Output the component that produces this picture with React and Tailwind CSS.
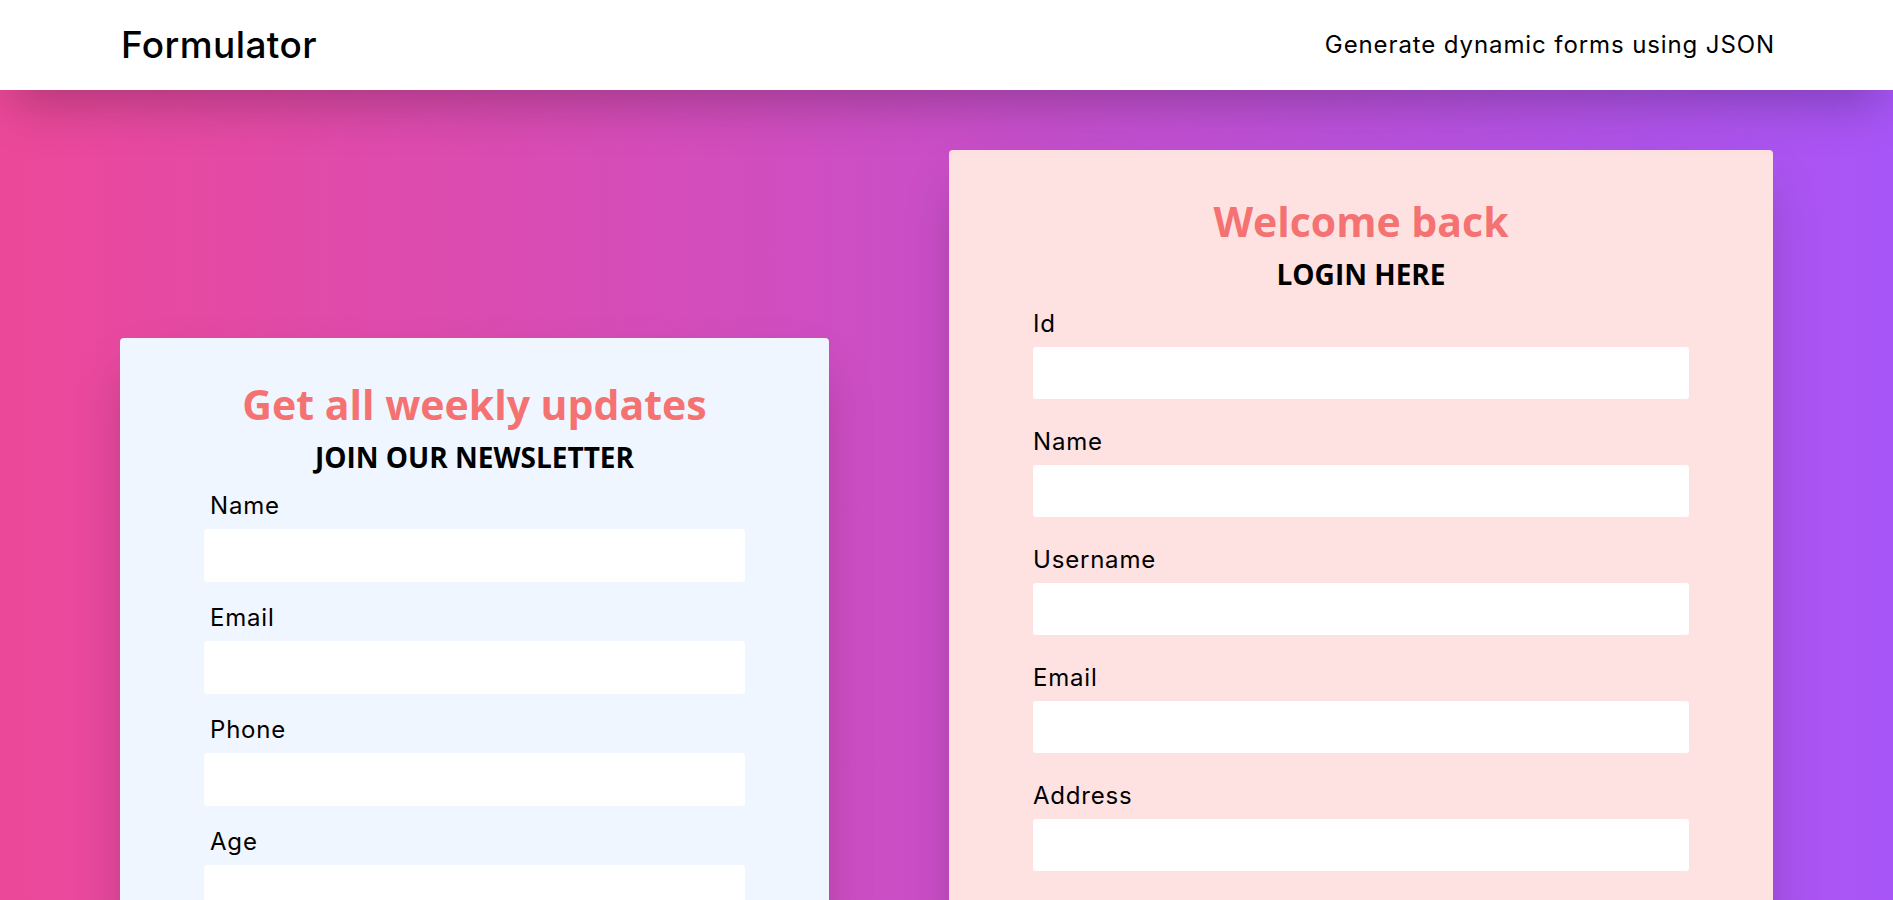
import React from 'react'

const BODY_FONT = { fontFamily: 'Inter, "Noto Sans", sans-serif' }
const HEAD_FONT = { fontFamily: '"Open Sans", "Noto Sans", sans-serif' }

const newsletterFields = ['Name', 'Email', 'Phone', 'Age', 'City']
const loginFields = ['Id', 'Name', 'Username', 'Email', 'Address', 'Password']

function Field({ label, indent, gap, inputH }) {
  return (
    <div className={gap}>
      <label className={`block text-[24px] leading-[24px] tracking-[0.8px] text-black ${indent ? 'ml-[6px]' : ''}`} style={BODY_FONT}>
        {label}
      </label>
      <input type="text" className={`mt-[11px] block w-full ${inputH} bg-white rounded-[3px] outline-none px-3`} />
    </div>
  )
}

function FormCard({ title, subtitle, fields, bg, pt, firstGap, fieldGap, indent, width, extra, inputH }) {
  return (
    <div className={`${width} ${bg} ${pt} ${extra} rounded-[4px] px-[84px] pb-16 shadow-2xl shrink-0`}>
      <h2 className="text-center text-[41px] leading-[42px] font-bold text-[#f47272]" style={HEAD_FONT}>
        {title}
      </h2>
      <h3 className="mt-[19px] text-center text-[28px] leading-[26px] font-bold text-black" style={HEAD_FONT}>
        {subtitle}
      </h3>
      <form className={firstGap} onSubmit={e => e.preventDefault()}>
        {fields.map((f, i) => (
          <Field key={f + i} label={f} indent={indent} inputH={inputH} gap={i === 0 ? '' : fieldGap} />
        ))}
        <button className="mt-8 w-full h-[52px] rounded-[3px] bg-[#f47272] text-white text-xl" style={BODY_FONT}>
          Submit
        </button>
      </form>
    </div>
  )
}

export default function App() {
  return (
    <div className="min-h-screen" style={BODY_FONT}>
      <header className="relative z-10 h-[90px] bg-white shadow-2xl flex items-center justify-between pl-[121px] pr-[118px]">
        <h1 className="text-[37px] font-medium text-black tracking-[0.4px]">Formulator</h1>
        <p className="text-[24px] text-black tracking-[0.9px]">Generate dynamic forms using JSON</p>
      </header>

      <main className="bg-[linear-gradient(to_right,#ec4899,#a855f7)] min-h-[810px] flex items-start gap-[120px] px-[120px] pt-[60px] pb-20">
        <FormCard
          title="Get all weekly updates"
          subtitle="JOIN OUR NEWSLETTER"
          fields={newsletterFields}
          bg="bg-[#eff6ff]"
          width="w-[709px]"
          pt="pt-[45px]"
          extra="mt-[188px]"
          firstGap="mt-[24px]"
          fieldGap="mt-[24px]"
          inputH="h-[53px]"
          indent
        />
        <FormCard
          title="Welcome back"
          subtitle="LOGIN HERE"
          fields={loginFields}
          bg="bg-[#fee2e2]"
          width="w-[824px]"
          pt="pt-[50px]"
          extra=""
          firstGap="mt-[25px]"
          fieldGap="mt-[31px]"
          inputH="h-[52px]"
        />
      </main>
    </div>
  )
}
